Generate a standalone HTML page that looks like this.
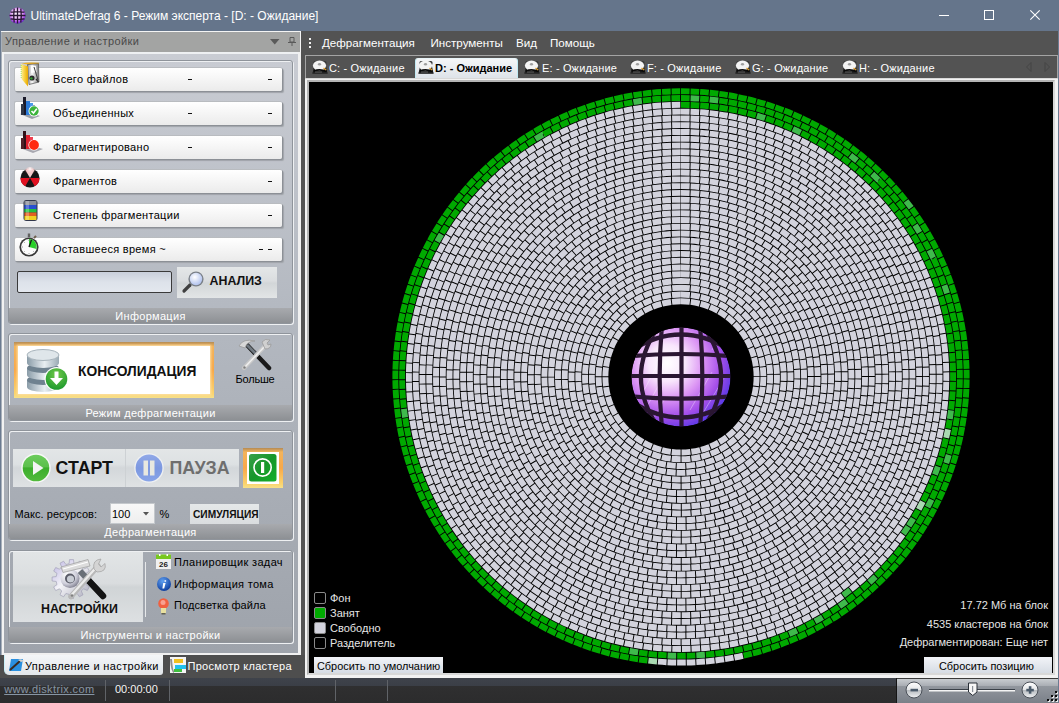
<!DOCTYPE html>
<html><head><meta charset="utf-8">
<style>
*{margin:0;padding:0;box-sizing:border-box}
html,body{width:1059px;height:703px;overflow:hidden;background:#535353;font-family:"Liberation Sans",sans-serif;font-size:11.5px;position:relative}
.a{position:absolute}
.t{position:absolute;white-space:nowrap;line-height:1}
svg{position:absolute;overflow:visible}
.gb{position:absolute;left:8px;width:285px;border:1px solid #8f949b;border-radius:3px;box-shadow:inset 1px 1px 0 #eef0f2,1px 1px 0 #eef0f2}
.gf{position:absolute;left:0;bottom:0;width:100%;height:15px;background:linear-gradient(#a8aaae,#8d9094);border-radius:0 0 2px 2px;color:#fff;text-align:center;font-size:11px;letter-spacing:.3px;line-height:17px}
.row{position:absolute;left:14px;width:268px;height:24px;border-top:1px solid #b9bcc0;border-left:1px solid #b9bcc0;border-radius:2px;background:linear-gradient(#ffffff,#ebebeb);box-shadow:1px 1px 0 #8c9096,2px 2px 1px #a0a4aa}
.rt{position:absolute;left:38px;top:6.2px;color:#000;font-size:11px;letter-spacing:.3px;line-height:1}
.dd{position:absolute;top:11px;width:4px;height:1px;background:#111}
.wt{color:#fff}
.tb{position:absolute;top:62.7px;color:#fff;font-size:11px;letter-spacing:.15px;line-height:1;white-space:nowrap}
.lg{position:absolute;left:314px;width:12px;height:12px;border:1px solid #8a8a8a;border-radius:2px}
.lt{position:absolute;left:330px;color:#e6e6e6;font-size:11px;line-height:1;white-space:nowrap}
.it{position:absolute;right:11px;color:#e6e6e6;font-size:11px;line-height:1;white-space:nowrap}
</style></head><body>

<!-- title bar -->
<div class="a" style="left:0;top:0;width:1059px;height:31px;background:#65758b"></div>
<svg style="left:9px;top:7px" width="17" height="17" viewBox="0 0 17 17"><defs><radialGradient id="ti" cx="45%" cy="40%" r="65%"><stop offset="0" stop-color="#ffffff"/><stop offset=".45" stop-color="#eec0f8"/><stop offset=".8" stop-color="#a040e0"/><stop offset="1" stop-color="#4020c0"/></radialGradient></defs><circle cx="8.5" cy="8.5" r="8" fill="url(#ti)"/><path d="M5.2 1.5Q4.2 8.5 5.2 15.5M8.5 0.5V16.5M11.8 1.5Q12.8 8.5 11.8 15.5M1.5 5.2Q8.5 4.2 15.5 5.2M0.5 8.5H16.5M1.5 11.8Q8.5 12.8 15.5 11.8" stroke="#2a1535" stroke-width="1.3" fill="none"/></svg>
<div class="t" style="left:30.5px;top:10px;color:#fff;font-size:12px">UltimateDefrag 6 - Режим эксперта - [D: - Ожидание]</div>
<div class="a" style="left:939px;top:15px;width:10px;height:1px;background:#fff"></div>
<div class="a" style="left:984px;top:10px;width:10px;height:10px;border:1px solid #fff"></div>
<svg style="left:1030px;top:10px" width="10" height="10"><path d="M0.3 0.3L9.7 9.7M9.7 0.3L0.3 9.7" stroke="#fff" stroke-width="1.1"/></svg>

<!-- left panel frame -->
<div class="a" style="left:0;top:31px;width:1px;height:624px;background:#6a7a90"></div>
<div class="a" style="left:1px;top:31px;width:1px;height:624px;background:#a8b0ba"></div>
<div class="a" style="left:2px;top:31px;width:2px;height:624px;background:#f2f2f2"></div>
<div class="a" style="left:1px;top:31px;width:300px;height:1px;background:#f4f4f4"></div>
<div class="a" style="left:298px;top:52px;width:3px;height:603px;background:#f0f0f0"></div>
<div class="a" style="left:300px;top:31px;width:1px;height:21px;background:#f4f4f4"></div>
<div class="a" style="left:2px;top:32px;width:298px;height:20px;background:#a3a4a3"></div>
<div class="t" style="left:5px;top:36.2px;color:#4a4a4a;font-size:11px;letter-spacing:.4px">Управление и настройки</div>
<svg style="left:270px;top:38.5px" width="10" height="6"><path d="M0 0H9.5L4.75 5.5Z" fill="#5a5a5a"/></svg>
<svg style="left:288px;top:37px" width="8" height="9"><path d="M2 0.5H6V5H2Z" stroke="#5a5a5a" fill="none"/><path d="M0 5.5H8M4 5.5V9" stroke="#5a5a5a"/></svg>
<div class="a" style="left:4px;top:52px;width:294px;height:2px;background:#eef0f2"></div>
<div class="a" style="left:4px;top:54px;width:294px;height:599px;background:linear-gradient(#c9ccd3,#b4b9c1 42%,#9ea3ab)"></div>
<div class="a" style="left:2px;top:653px;width:298px;height:2px;background:#f0f0f0"></div>

<!-- group boxes -->
<div class="gb" style="top:60px;height:264px"><div class="gf">Информация</div></div>
<div class="gb" style="top:333px;height:88px"><div class="gf">Режим дефрагментации</div></div>
<div class="gb" style="top:430px;height:110px"><div class="gf">Дефрагментация</div></div>
<div class="gb" style="top:550px;height:93px"><div class="gf">Инструменты и настройки</div></div>

<!-- info rows -->
<div class="row" style="top:67px"><div class="rt">Всего файлов</div><div class="dd" style="left:173px"></div><div class="dd" style="left:253px"></div></div>
<div class="row" style="top:101px"><div class="rt">Объединенных</div><div class="dd" style="left:173px"></div><div class="dd" style="left:253px"></div></div>
<div class="row" style="top:135px"><div class="rt">Фрагментировано</div><div class="dd" style="left:173px"></div><div class="dd" style="left:253px"></div></div>
<div class="row" style="top:169px"><div class="rt">Фрагментов</div><div class="dd" style="left:253px"></div></div>
<div class="row" style="top:203px"><div class="rt">Степень фрагментации</div><div class="dd" style="left:253px"></div></div>
<div class="row" style="top:237px"><div class="rt">Оставшееся время ~</div><div class="dd" style="left:244px"></div><div class="dd" style="left:253px"></div></div>

<svg style="left:20px;top:62px" width="20" height="25" viewBox="0 0 20 25">
 <defs><linearGradient id="fy" x1="0" x2="1"><stop offset="0" stop-color="#fff0a0"/><stop offset=".5" stop-color="#f8d040"/><stop offset="1" stop-color="#e8a800"/></linearGradient>
 <linearGradient id="fd" x1="0" x2="1"><stop offset="0" stop-color="#9a9a9a"/><stop offset=".4" stop-color="#f8f8f8"/><stop offset="1" stop-color="#7a7a7a"/></linearGradient></defs>
 <path d="M1.5 1.5Q8 0 19 0.8V2.2L8 2.5Z" fill="#f0b020"/>
 <path d="M7.5 2.5L18.5 1.8L19 20L9 22.5Z" fill="url(#fd)" stroke="#505050" stroke-width=".7"/>
 <path d="M11 4L16 4L16.5 10L11 11Z" fill="#ffffff" opacity=".9"/>
 <path d="M14 5L18 18" stroke="#404040" stroke-width="1"/>
 <circle cx="12" cy="16" r="2.6" fill="#2a2a2a"/><circle cx="11.4" cy="16.4" r="1.2" fill="#30a030"/>
 <path d="M16 17L18.5 20" stroke="#303030" stroke-width="1.2"/>
 <path d="M1 2L8 4.5V24.5L1.5 17Z" fill="url(#fy)"/>
 <path d="M1.2 3V16" stroke="#90e040" stroke-width=".8" stroke-dasharray="1 1"/>
</svg>
<svg style="left:19px;top:95px" width="22" height="25" viewBox="0 0 22 25">
 <path d="M1 19L13 24L21 21L9 17Z" fill="#9aa0a8"/>
 <rect x="4" y="2" width="3" height="18" fill="#1a1a2a"/>
 <rect x="2" y="9" width="3" height="11" fill="#303848"/>
 <rect x="7" y="6" width="4" height="14" fill="#2a7ad8"/>
 <rect x="11" y="8" width="3" height="12" fill="#4a9ae8"/>
 <rect x="14" y="10" width="2" height="8" fill="#607090"/>
 <circle cx="15" cy="16" r="5.5" fill="#fff"/><circle cx="15" cy="16" r="4.7" fill="#3cb43c"/>
 <path d="M12.5 16L14.5 18L17.8 13.8" stroke="#fff" stroke-width="1.6" fill="none"/>
</svg>
<svg style="left:19px;top:130px" width="25" height="24" viewBox="0 0 25 24">
 <path d="M1 18L14 23L24 19L10 15Z" fill="#a8a8b0"/>
 <rect x="4" y="1" width="3" height="18" fill="#301018"/>
 <rect x="2" y="8" width="3" height="11" fill="#502028"/>
 <rect x="7" y="5" width="4" height="14" fill="#e02030"/>
 <rect x="11" y="7" width="3" height="12" fill="#f04050"/>
 <circle cx="15" cy="15" r="5.6" fill="#fff"/><circle cx="15" cy="15" r="4.9" fill="#ff2a10"/>
</svg>
<svg style="left:20px;top:168px" width="20" height="20" viewBox="0 0 20 20">
 <defs><radialGradient id="rh" cx="50%" cy="15%" r="50%"><stop offset="0" stop-color="#fff"/><stop offset="1" stop-color="#f0a0a0" stop-opacity="0"/></radialGradient></defs>
 <circle cx="10" cy="10" r="9.5" fill="#161616"/>
 <path d="M10 10L0.5 10A9.5 9.5 0 0 0 5.25 18.2Z M10 10L19.5 10A9.5 9.5 0 0 1 14.75 18.2Z" fill="#e01020"/>
 <path d="M10 10L5.25 1.8A9.5 9.5 0 0 1 14.75 1.8Z" fill="#f4d0d0"/>
 <circle cx="10" cy="5" r="6" fill="url(#rh)"/>
</svg>
<svg style="left:23px;top:199px" width="15" height="23" viewBox="0 0 15 23">
 <rect x="0.5" y="1" width="14" height="21" rx="3" fill="#30364a"/>
 <rect x="1.5" y="2" width="12" height="4" fill="#8a8e98"/>
 <rect x="1.5" y="6" width="12" height="4" fill="#2850d0"/>
 <rect x="1.5" y="10" width="12" height="3.5" fill="#20c040"/>
 <rect x="1.5" y="13.5" width="12" height="3.5" fill="#e06020"/>
 <rect x="1.5" y="17" width="12" height="4" fill="#f0d020"/>
 <rect x="3" y="2" width="3" height="19" fill="#fff" opacity="0.25"/>
</svg>
<svg style="left:19px;top:233px" width="21" height="24" viewBox="0 0 21 24">
 <rect x="8.8" y="0.5" width="2.4" height="3.5" fill="#606060"/>
 <rect x="15" y="2.5" width="2" height="3" fill="#706050" transform="rotate(40 16 4)"/>
 <circle cx="10" cy="14" r="9.6" fill="#383838"/>
 <circle cx="10" cy="14" r="7.9" fill="#fbfbfb"/>
 <path d="M10 14V6.1A7.9 7.9 0 0 1 17.6 16Z" fill="#28d028"/>
 <path d="M10 14L12.6 6.6" stroke="#1a1a1a" stroke-width="1.3"/>
 <path d="M10 7v1M10 20v1M3 14h1M16 14h1M5 9l.7.7M5 19l.7-.7M15 19l-.7-.7" stroke="#888" stroke-width=".8"/>
</svg>


<div class="a" style="left:17px;top:271px;width:155px;height:22px;border:1px solid #3a3a3a;border-radius:2px;background:linear-gradient(#c9cfdb,#dde2ea 50%,#e3e7ee)"></div>
<div class="a" style="left:177px;top:267px;width:100px;height:31px;background:linear-gradient(#e4e7e8,#dadddf 45%,#d2d6d8 52%,#e2e5e6)"></div>
<div class="t" style="left:209.5px;top:275.3px;font-weight:bold;font-size:12.4px;color:#111">АНАЛИЗ</div>

<svg style="left:182px;top:270px" width="23" height="23" viewBox="0 0 23 23">
 <defs><radialGradient id="mg" cx="40%" cy="35%" r="60%"><stop offset="0" stop-color="#ffffff"/><stop offset="1" stop-color="#b8c8f0"/></radialGradient></defs>
 <path d="M2 21L8 15" stroke="#404040" stroke-width="3.2" stroke-linecap="round"/>
 <circle cx="14" cy="9" r="7.6" fill="#7a8088"/>
 <circle cx="14" cy="9" r="6.2" fill="url(#mg)"/>
</svg>


<!-- consolidation -->
<div class="a" style="left:14px;top:342px;width:200px;height:56px;background:linear-gradient(#b58c55,#f3b45c 8%,#f8a848 50%,#fbd46e 92%,#f6e08a)"></div>
<div class="a" style="left:18px;top:346px;width:192px;height:48px;background:#fff;box-shadow:0 0 2px 1px #fde0a8"></div>
<div class="t" style="left:78px;top:364.5px;font-weight:bold;font-size:13.8px;color:#111">КОНСОЛИДАЦИЯ</div>
<div class="t" style="left:235.5px;top:374.2px;color:#000;font-size:11px;letter-spacing:-.2px">Больше</div>

<svg style="left:26px;top:348px" width="46" height="46" viewBox="0 0 46 46">
 <defs>
  <linearGradient id="dbg" x1="0" x2="1"><stop offset="0" stop-color="#8a9ca8"/><stop offset=".55" stop-color="#e8eef2"/><stop offset="1" stop-color="#9aaab4"/></linearGradient>
  <radialGradient id="gg" cx="50%" cy="30%" r="70%"><stop offset="0" stop-color="#70c848"/><stop offset="1" stop-color="#1e9a2e"/></radialGradient>
 </defs>
 <path d="M1 32V39A16 5 0 0 0 33 39V32Z" fill="url(#dbg)"/>
 <ellipse cx="17" cy="32" rx="16" ry="5" fill="#6f8290"/>
 <path d="M1 20V27A16 5 0 0 0 33 27V20Z" fill="url(#dbg)"/>
 <ellipse cx="17" cy="20" rx="16" ry="5" fill="#6f8290"/>
 <path d="M1 7V15A16 5 0 0 0 33 15V7Z" fill="url(#dbg)"/>
 <ellipse cx="17" cy="7" rx="16" ry="5.5" fill="#dfe6ea" stroke="#a8b4bc" stroke-width="1"/>
 <circle cx="30.5" cy="31" r="12" fill="#fff"/>
 <circle cx="30.5" cy="31" r="10.8" fill="url(#gg)"/>
 <path d="M28.5 23.5H32.5V30H37L30.5 37L24 30H28.5Z" fill="#fff"/>
</svg>
<svg style="left:237px;top:337px" width="36" height="35" viewBox="0 0 36 35">
 <path d="M10 8L32 31" stroke="#1a1a1a" stroke-width="4.5" stroke-linecap="round"/>
 <path d="M10 8L20 18" stroke="#707880" stroke-width="3"/>
 <path d="M2 9Q6 1 18 4Q10 4 8 11Z" fill="#d8d8d8" stroke="#9a9a9a" stroke-width="0.8"/>
 <path d="M7 31L29 8" stroke="#c8c8c8" stroke-width="4.2" stroke-linecap="round"/>
 <path d="M7 31L29 8" stroke="#eeeeee" stroke-width="1.6"/>
 <path d="M25 5Q28 1 33 3L30 6L31 8L34 7Q34 12 28 12Z" fill="#d0d0d0" stroke="#9a9a9a" stroke-width="0.8"/>
 <circle cx="7.5" cy="30.5" r="1.2" fill="#808080"/>
</svg>


<!-- start/pause -->
<div class="a" style="left:13px;top:449px;width:226px;height:38px;background:linear-gradient(#e3e6e7,#dde1e3 40%,#d3d7da 50%,#dfe2e4)"></div>
<div class="a" style="left:125px;top:449px;width:1px;height:38px;background:#cdd1d4"></div>
<div class="t" style="left:55.5px;top:460px;font-weight:bold;font-size:17.8px;color:#111">СТАРТ</div>
<div class="t" style="left:169.5px;top:460px;font-weight:bold;font-size:17.8px;color:#6e6e6e">ПАУЗА</div>
<div class="a" style="left:243px;top:448px;width:40px;height:40px;background:linear-gradient(#b48a55,#f3b45c 10%,#f8a848 50%,#fbd46e 90%,#f6e08a)"></div>
<div class="a" style="left:247px;top:452px;width:32px;height:32px;background:#fff"></div>

<svg style="left:21px;top:453px" width="30" height="30" viewBox="0 0 30 30">
 <defs><linearGradient id="pg" x1="0" y1="0" x2="0" y2="1"><stop offset="0" stop-color="#6ccc5c"/><stop offset=".45" stop-color="#5cc04c"/><stop offset=".5" stop-color="#3cae2c"/><stop offset="1" stop-color="#52ba3c"/></linearGradient></defs>
 <circle cx="15" cy="15" r="14.7" fill="#f8f8f8"/>
 <circle cx="15" cy="15" r="13.3" fill="url(#pg)"/>
 <path d="M12 8V22L22.5 15Z" fill="#f4f4f4"/>
</svg>
<svg style="left:134px;top:453px" width="30" height="30" viewBox="0 0 30 30">
 <defs><linearGradient id="bg2" x1="0" y1="0" x2="0" y2="1"><stop offset="0" stop-color="#90a8e8"/><stop offset=".5" stop-color="#7c98e0"/><stop offset="1" stop-color="#88a4e8"/></linearGradient></defs>
 <circle cx="15" cy="15" r="14.7" fill="#eef0f2"/>
 <circle cx="15" cy="15" r="13.4" fill="url(#bg2)"/>
 <rect x="9.5" y="7.5" width="4.5" height="15" fill="#e8e8e0"/>
 <rect x="16" y="7.5" width="4.5" height="15" fill="#e8e8e0"/>
</svg>
<svg style="left:249px;top:454px" width="28" height="28" viewBox="0 0 28 28">
 <defs><linearGradient id="pw" x1="0" y1="0" x2="1" y2="1"><stop offset="0" stop-color="#3aa04a"/><stop offset=".5" stop-color="#16962a"/><stop offset="1" stop-color="#12b02a"/></linearGradient></defs>
 <rect x="0" y="0" width="27.5" height="27.5" rx="2.5" fill="url(#pw)"/>
 <circle cx="13.6" cy="13.5" r="8.6" stroke="#fff" stroke-width="1.6" fill="none"/>
 <rect x="12" y="8" width="3.2" height="11" fill="#fff"/>
</svg>


<div class="t" style="left:14.5px;top:508.7px;color:#000;font-size:11px;letter-spacing:.05px">Макс. ресурсов:</div>
<div class="a" style="left:110px;top:503px;width:45px;height:21px;background:linear-gradient(#f8f8f8,#eeeeee);border:1px solid #c4c8cc"></div>
<div class="t" style="left:112px;top:508.7px;color:#000;font-size:11px">100</div>
<svg style="left:143px;top:512px" width="6" height="4"><path d="M0 0H6L3 3.5Z" fill="#555"/></svg>
<div class="t" style="left:159.5px;top:508.7px;color:#000;font-size:11px">%</div>
<div class="a" style="left:190px;top:504px;width:69px;height:20px;background:linear-gradient(#e5e8e9,#dadddf)"></div>
<div class="t" style="left:193px;top:509.5px;font-weight:bold;font-size:10.2px;color:#111">СИМУЛЯЦИЯ</div>

<!-- settings -->
<div class="a" style="left:13px;top:552px;width:130px;height:70px;background:linear-gradient(#e2e5e6,#d9dcde 45%,#d0d4d6 50%,#dde0e2)"></div>
<div class="a" style="left:145px;top:562px;width:1px;height:55px;background:#e6e8ea"></div>
<div class="t" style="left:41px;top:603px;font-weight:bold;font-size:12.4px;color:#111">НАСТРОЙКИ</div>
<div class="t" style="left:174px;top:556.7px;color:#000;font-size:11px;letter-spacing:.35px">Планировщик задач</div>
<div class="t" style="left:174px;top:578.7px;color:#000;font-size:11px;letter-spacing:.3px">Информация тома</div>
<div class="t" style="left:174px;top:600.3px;color:#000;font-size:11px;letter-spacing:.1px">Подсветка файла</div>

<svg style="left:0;top:0" width="1" height="1">
 <defs>
  <linearGradient id="gr" x1="0" y1="0" x2="1" y2="1"><stop offset="0" stop-color="#b8b0e0"/><stop offset=".45" stop-color="#f4f4f8"/><stop offset="1" stop-color="#a8a8b8"/></linearGradient>
  <radialGradient id="gr2" cx=".35" cy=".3" r=".8"><stop offset="0" stop-color="#ffffff"/><stop offset=".6" stop-color="#d0d0dc"/><stop offset="1" stop-color="#707080"/></radialGradient>
 </defs>
 <path d="M69.5 559.6L73.5 559.6L73.9 563.7L77.1 564.5L79.4 561.2L83.0 563.2L81.3 567.0L83.5 569.2L87.3 567.5L89.3 571.1L86.0 573.4L86.8 576.6L90.9 577.0L90.9 581.0L86.8 581.4L86.0 584.6L89.3 586.9L87.3 590.5L83.5 588.8L81.3 591.0L83.0 594.8L79.4 596.8L77.1 593.5L73.9 594.3L73.5 598.4L69.5 598.4L69.1 594.3L65.9 593.5L63.6 596.8L60.0 594.8L61.7 591.0L59.5 588.8L55.7 590.5L53.7 586.9L57.0 584.6L56.2 581.4L52.1 581.0L52.1 577.0L56.2 576.6L57.0 573.4L53.7 571.1L55.7 567.5L59.5 569.2L61.7 567.0L60.0 563.2L63.6 561.2L65.9 564.5L69.1 563.7Z" fill="url(#gr)" stroke="#9a98b0" stroke-width=".6"/>
 <circle cx="70" cy="578.5" r="9.5" fill="url(#gr2)"/>
 <circle cx="70" cy="578.5" r="5" fill="#5a5c68"/>
 <circle cx="70.5" cy="579" r="3.6" fill="#c8ccd4"/>
 <path d="M80 571L103 596" stroke="#6a7078" stroke-width="6"/>
 <path d="M88 580L103 596" stroke="#141414" stroke-width="6.5" stroke-linecap="round"/>
 <path d="M61 567L88 559.5L90 566L63 572.5Z" fill="#dcdcdc" stroke="#9c9c9c" stroke-width=".7"/>
 <path d="M63 569L88 562" stroke="#ffffff" stroke-width="1.2"/>
 <path d="M71 596.5L98 566" stroke="#b8b8b8" stroke-width="5.5" stroke-linecap="round"/>
 <path d="M71.5 595L97 566.5" stroke="#ececec" stroke-width="2.2"/>
 <path d="M94 569Q92 560 101 559L98.5 564L101 567L105 563.5Q107 572 97 572Z" fill="#d4d4d4" stroke="#a0a0a0" stroke-width=".7"/>
 <circle cx="72" cy="595.5" r="1.2" fill="#808080"/>
</svg>
<svg style="left:156px;top:554px" width="15" height="15" viewBox="0 0 15 15">
 <rect x="0" y="0.5" width="15" height="14.5" fill="#f0f0f0"/>
 <rect x="0" y="0.5" width="15" height="4.5" fill="#78c820"/>
 <rect x="3" y="0" width="1.5" height="2" fill="#fff"/><rect x="10.5" y="0" width="1.5" height="2" fill="#fff"/>
 <text x="7.5" y="13" text-anchor="middle" font-family="Liberation Sans" font-weight="bold" font-size="8" fill="#222">26</text>
</svg>
<svg style="left:157px;top:577px" width="15" height="15" viewBox="0 0 15 15">
 <defs><radialGradient id="ib" cx="40%" cy="30%" r="70%"><stop offset="0" stop-color="#60a0f0"/><stop offset="1" stop-color="#1040a0"/></radialGradient></defs>
 <circle cx="7" cy="7" r="7" fill="url(#ib)"/>
 <path d="M7.5 3.2h1.6v1.6h-1.6z M6.2 6h2.4l-1.4 5.5h-1.8z" fill="#fff"/>
</svg>
<svg style="left:158px;top:598px" width="11" height="17" viewBox="0 0 11 17">
 <circle cx="5.5" cy="5.5" r="5.3" fill="#f06040"/>
 <circle cx="5" cy="4.5" r="2.5" fill="#f8a090"/>
 <rect x="3" y="10" width="5" height="5" fill="#e8e0a0"/>
 <rect x="3.5" y="15" width="4" height="1.5" fill="#606050"/>
</svg>


<!-- bottom tabs -->
<div class="a" style="left:0;top:655px;width:305px;height:23px;background:#4e4e4e"></div>
<div class="a" style="left:4px;top:655px;width:159px;height:20px;background:linear-gradient(#f4f6f8,#e2e6ea);border-radius:0 0 3px 5px;border-left:1px solid #c8f0f8"></div>
<div class="t" style="left:25px;top:660.7px;color:#000;font-size:11px;letter-spacing:.38px">Управление и настройки</div>
<div class="t" style="left:187.5px;top:660.7px;color:#fff;font-size:11px;letter-spacing:.28px">Просмотр кластера</div>

<svg style="left:8px;top:658px" width="16" height="14" viewBox="0 0 16 14">
 <path d="M3 1H15L13 13H1Z" fill="#2a90e0"/>
 <path d="M2 12L12 3" stroke="#3a2a20" stroke-width="2"/>
 <path d="M10 2Q13 0 16 3L13 4Z" fill="#d0d0d0"/>
</svg>
<svg style="left:170px;top:657px" width="16" height="16" viewBox="0 0 16 16">
 <rect x="0" y="0" width="16" height="16" fill="#f4f4f4"/>
 <path d="M1 2Q2 15 4 15" stroke="#909090" stroke-width="2" fill="none"/>
 <rect x="4" y="2" width="9" height="4" fill="#f0c020"/>
 <rect x="5" y="8" width="11" height="4" fill="#20c0f0"/>
 <rect x="4" y="12" width="8" height="3" fill="#40c040"/>
</svg>


<!-- status bar -->
<div class="a" style="left:0;top:678px;width:1059px;height:25px;background:linear-gradient(#3f434b,#3b3f47 32%,#2f2f30 33%,#2c2c2d)"></div>
<div class="t" style="left:4.2px;top:684.2px;color:#8795a4;font-size:11px;letter-spacing:.37px;text-decoration:underline">www.disktrix.com</div>
<div class="a" style="left:105px;top:680px;width:1px;height:21px;background:#606368"></div>
<div class="t" style="left:115px;top:684.2px;color:#f4f4f4;font-size:11px">00:00:00</div>
<div class="a" style="left:169px;top:680px;width:1px;height:21px;background:#606368"></div>
<div class="a" style="left:335px;top:680px;width:1px;height:21px;background:#606368"></div>
<div class="a" style="left:387px;top:680px;width:1px;height:21px;background:#606368"></div>
<div class="a" style="left:896px;top:678px;width:2px;height:25px;background:#151515"></div>
<div class="a" style="left:897px;top:678px;width:162px;height:25px;background:linear-gradient(#3a3a3a 0,#3a3a3a 1px,#c8ccd0 1px,#a9adb3 32%,#92979e 33%,#858a92 70%,#7a8088)"></div>

<svg style="left:0;top:0" width="1" height="1">
 <defs><linearGradient id="zb" x1="0" y1="0" x2="0" y2="1"><stop offset="0" stop-color="#ffffff"/><stop offset=".48" stop-color="#e4e6e8"/><stop offset=".52" stop-color="#b8bcc0"/><stop offset="1" stop-color="#f0f2f4"/></linearGradient></defs>
 <circle cx="914" cy="690" r="8" fill="url(#zb)" stroke="#4a5058" stroke-width="1"/>
 <rect x="910.5" y="688.8" width="7.5" height="2.6" fill="#4a5a6a"/>
 <rect x="929" y="689" width="86" height="1" fill="#3a4048"/><rect x="929" y="690" width="86" height="1.5" fill="#f4f4f4"/>
 <path d="M968.5 683H977V692L972.75 695.5L968.5 692Z" fill="#f6f6f6" stroke="#2a3038" stroke-width="1"/>
 <rect x="972" y="686" width="1.2" height="6" fill="#8a9098"/>
 <circle cx="1030" cy="690" r="8" fill="url(#zb)" stroke="#4a5058" stroke-width="1"/>
 <rect x="1026.3" y="688.8" width="7.5" height="2.6" fill="#4a5a6a"/><rect x="1028.8" y="686.2" width="2.6" height="7.5" fill="#4a5a6a"/>
 <path d="M1056 692h2v2h-2zM1052 696h2v2h-2zM1056 696h2v2h-2zM1048 700h2v2h-2zM1052 700h2v2h-2zM1056 700h2v2h-2z" fill="#f4f4f4" opacity=".9"/>
 <path d="M1055 691h2v2h-2zM1051 695h2v2h-2zM1055 695h2v2h-2zM1047 699h2v2h-2zM1051 699h2v2h-2zM1055 699h2v2h-2z" fill="#0a0a0a"/>
</svg>


<!-- menu bar -->
<svg style="left:308px;top:37px" width="4" height="12"><path d="M1 1h2v2h-2zM1 5h2v2h-2zM1 9h2v2h-2z" fill="#f0f0f0"/></svg>
<div class="t wt" style="left:322px;top:37px;font-size:11.6px">Дефрагментация</div>
<div class="t wt" style="left:430.5px;top:37px;font-size:11.6px">Инструменты</div>
<div class="t wt" style="left:516px;top:37px;font-size:11.6px">Вид</div>
<div class="t wt" style="left:550px;top:37px;font-size:11.6px">Помощь</div>

<!-- tab strip -->
<div class="a" style="left:305px;top:55px;width:753px;height:1px;background:#a4a4a4"></div>
<div class="a" style="left:305px;top:55px;width:1px;height:24px;background:#a4a4a4"></div>
<div class="a" style="left:1057px;top:55px;width:1px;height:24px;background:#a4a4a4"></div>
<div class="a" style="left:415px;top:58px;width:103px;height:21px;background:linear-gradient(#f4f6f8,#dde2e8);border-left:1px solid #c0eaf4;border-right:1px solid #c0eaf4;border-top:1px solid #e8f4f8;border-radius:3px 3px 0 0"></div>
<div class="tb" style="left:329px">C: - Ожидание</div>
<div class="tb" style="left:435px;color:#000;font-weight:bold;font-size:11px;letter-spacing:0;top:62.7px">D: - Ожидание</div>
<div class="tb" style="left:542px">E: - Ожидание</div>
<div class="tb" style="left:647px">F: - Ожидание</div>
<div class="tb" style="left:752px">G: - Ожидание</div>
<div class="tb" style="left:859px">H: - Ожидание</div>
<svg style="left:1026px;top:62px" width="24" height="10"><path d="M5 0.5L0.5 5L5 9.5Z M19 0.5L23.5 5L19 9.5Z" stroke="#454545" fill="none" stroke-width="1"/></svg>
<svg style="left:312px;top:60px" width="16" height="14" viewBox="0 0 16 14">
 <path d="M2.5 4H13.5L15.5 13.5H0.5Z" fill="#1a1a1a"/>
 <rect x="1.5" y="1" width="13" height="4" rx="1.5" fill="#3a3a3a"/>
 <ellipse cx="7.5" cy="5.6" rx="6.6" ry="5.2" fill="#f4f4f4"/>
 <ellipse cx="7.5" cy="4.2" rx="1.6" ry="1.3" fill="#a0a0a0"/>
 <path d="M2 11Q8 8.6 14.5 11.5" stroke="#0a0a0a" stroke-width="1.6" fill="none"/>
 <path d="M11.5 8L14.2 10" stroke="#e0a030" stroke-width="1.4"/>
 <path d="M3 12.2H10" stroke="#909090" stroke-width=".8"/>
 <rect x="0.5" y="12.5" width="15" height="1.2" fill="#2a2a2a"/>
</svg><svg style="left:418px;top:60px" width="16" height="14" viewBox="0 0 16 14">
 <path d="M2.5 4H13.5L15.5 13.5H0.5Z" fill="#1a1a1a"/>
 <rect x="1.5" y="1" width="13" height="4" rx="1.5" fill="#3a3a3a"/>
 <ellipse cx="7.5" cy="5.6" rx="6.6" ry="5.2" fill="#f4f4f4"/>
 <ellipse cx="7.5" cy="4.2" rx="1.6" ry="1.3" fill="#a0a0a0"/>
 <path d="M2 11Q8 8.6 14.5 11.5" stroke="#0a0a0a" stroke-width="1.6" fill="none"/>
 <path d="M11.5 8L14.2 10" stroke="#e0a030" stroke-width="1.4"/>
 <path d="M3 12.2H10" stroke="#909090" stroke-width=".8"/>
 <rect x="0.5" y="12.5" width="15" height="1.2" fill="#2a2a2a"/>
</svg><svg style="left:524px;top:60px" width="16" height="14" viewBox="0 0 16 14">
 <path d="M2.5 4H13.5L15.5 13.5H0.5Z" fill="#1a1a1a"/>
 <rect x="1.5" y="1" width="13" height="4" rx="1.5" fill="#3a3a3a"/>
 <ellipse cx="7.5" cy="5.6" rx="6.6" ry="5.2" fill="#f4f4f4"/>
 <ellipse cx="7.5" cy="4.2" rx="1.6" ry="1.3" fill="#a0a0a0"/>
 <path d="M2 11Q8 8.6 14.5 11.5" stroke="#0a0a0a" stroke-width="1.6" fill="none"/>
 <path d="M11.5 8L14.2 10" stroke="#e0a030" stroke-width="1.4"/>
 <path d="M3 12.2H10" stroke="#909090" stroke-width=".8"/>
 <rect x="0.5" y="12.5" width="15" height="1.2" fill="#2a2a2a"/>
</svg><svg style="left:630px;top:60px" width="16" height="14" viewBox="0 0 16 14">
 <path d="M2.5 4H13.5L15.5 13.5H0.5Z" fill="#1a1a1a"/>
 <rect x="1.5" y="1" width="13" height="4" rx="1.5" fill="#3a3a3a"/>
 <ellipse cx="7.5" cy="5.6" rx="6.6" ry="5.2" fill="#f4f4f4"/>
 <ellipse cx="7.5" cy="4.2" rx="1.6" ry="1.3" fill="#a0a0a0"/>
 <path d="M2 11Q8 8.6 14.5 11.5" stroke="#0a0a0a" stroke-width="1.6" fill="none"/>
 <path d="M11.5 8L14.2 10" stroke="#e0a030" stroke-width="1.4"/>
 <path d="M3 12.2H10" stroke="#909090" stroke-width=".8"/>
 <rect x="0.5" y="12.5" width="15" height="1.2" fill="#2a2a2a"/>
</svg><svg style="left:735px;top:60px" width="16" height="14" viewBox="0 0 16 14">
 <path d="M2.5 4H13.5L15.5 13.5H0.5Z" fill="#1a1a1a"/>
 <rect x="1.5" y="1" width="13" height="4" rx="1.5" fill="#3a3a3a"/>
 <ellipse cx="7.5" cy="5.6" rx="6.6" ry="5.2" fill="#f4f4f4"/>
 <ellipse cx="7.5" cy="4.2" rx="1.6" ry="1.3" fill="#a0a0a0"/>
 <path d="M2 11Q8 8.6 14.5 11.5" stroke="#0a0a0a" stroke-width="1.6" fill="none"/>
 <path d="M11.5 8L14.2 10" stroke="#e0a030" stroke-width="1.4"/>
 <path d="M3 12.2H10" stroke="#909090" stroke-width=".8"/>
 <rect x="0.5" y="12.5" width="15" height="1.2" fill="#2a2a2a"/>
</svg><svg style="left:842px;top:60px" width="16" height="14" viewBox="0 0 16 14">
 <path d="M2.5 4H13.5L15.5 13.5H0.5Z" fill="#1a1a1a"/>
 <rect x="1.5" y="1" width="13" height="4" rx="1.5" fill="#3a3a3a"/>
 <ellipse cx="7.5" cy="5.6" rx="6.6" ry="5.2" fill="#f4f4f4"/>
 <ellipse cx="7.5" cy="4.2" rx="1.6" ry="1.3" fill="#a0a0a0"/>
 <path d="M2 11Q8 8.6 14.5 11.5" stroke="#0a0a0a" stroke-width="1.6" fill="none"/>
 <path d="M11.5 8L14.2 10" stroke="#e0a030" stroke-width="1.4"/>
 <path d="M3 12.2H10" stroke="#909090" stroke-width=".8"/>
 <rect x="0.5" y="12.5" width="15" height="1.2" fill="#2a2a2a"/>
</svg>

<!-- disk frame -->
<div class="a" style="left:305px;top:78px;width:753px;height:600px;background:#f2f2f2"></div>
<div class="a" style="left:305px;top:78px;width:753px;height:1px;background:#d8d8d8"></div>
<div class="a" style="left:307px;top:80px;width:748px;height:595px;border-style:solid;border-width:2px;border-color:#b4b4b4 #d8d8d8 #d8d8d8 #b4b4b4;background:#000"></div>
<svg width="1059" height="703" viewBox="0 0 1059 703" style="position:absolute;left:0;top:0" fill="none"><circle cx="681.0" cy="376.9" r="265.31" stroke="#d3d3dd" stroke-width="5.93" stroke-dasharray="8.631 0.950" transform="rotate(-90 681.0 376.9)"/><circle cx="681.0" cy="376.9" r="258.54" stroke="#d3d3dd" stroke-width="5.93" stroke-dasharray="8.662 0.950" transform="rotate(-90 681.0 376.9)"/><circle cx="681.0" cy="376.9" r="251.76" stroke="#d3d3dd" stroke-width="5.93" stroke-dasharray="8.637 0.950" transform="rotate(-90 681.0 376.9)"/><circle cx="681.0" cy="376.9" r="244.99" stroke="#d3d3dd" stroke-width="5.93" stroke-dasharray="8.671 0.950" transform="rotate(-90 681.0 376.9)"/><circle cx="681.0" cy="376.9" r="238.21" stroke="#d3d3dd" stroke-width="5.93" stroke-dasharray="8.644 0.950" transform="rotate(-90 681.0 376.9)"/><circle cx="681.0" cy="376.9" r="231.44" stroke="#d3d3dd" stroke-width="5.93" stroke-dasharray="8.680 0.950" transform="rotate(-90 681.0 376.9)"/><circle cx="681.0" cy="376.9" r="224.66" stroke="#d3d3dd" stroke-width="5.93" stroke-dasharray="8.653 0.950" transform="rotate(-90 681.0 376.9)"/><circle cx="681.0" cy="376.9" r="217.89" stroke="#d3d3dd" stroke-width="5.93" stroke-dasharray="8.691 0.950" transform="rotate(-90 681.0 376.9)"/><circle cx="681.0" cy="376.9" r="211.11" stroke="#d3d3dd" stroke-width="5.93" stroke-dasharray="8.662 0.950" transform="rotate(-90 681.0 376.9)"/><circle cx="681.0" cy="376.9" r="204.34" stroke="#d3d3dd" stroke-width="5.93" stroke-dasharray="8.703 0.950" transform="rotate(-90 681.0 376.9)"/><circle cx="681.0" cy="376.9" r="197.56" stroke="#d3d3dd" stroke-width="5.93" stroke-dasharray="8.673 0.950" transform="rotate(-90 681.0 376.9)"/><circle cx="681.0" cy="376.9" r="190.79" stroke="#d3d3dd" stroke-width="5.93" stroke-dasharray="8.717 0.950" transform="rotate(-90 681.0 376.9)"/><circle cx="681.0" cy="376.9" r="184.01" stroke="#d3d3dd" stroke-width="5.93" stroke-dasharray="8.685 0.950" transform="rotate(-90 681.0 376.9)"/><circle cx="681.0" cy="376.9" r="177.24" stroke="#d3d3dd" stroke-width="5.93" stroke-dasharray="8.734 0.950" transform="rotate(-90 681.0 376.9)"/><circle cx="681.0" cy="376.9" r="170.46" stroke="#d3d3dd" stroke-width="5.93" stroke-dasharray="8.699 0.950" transform="rotate(-90 681.0 376.9)"/><circle cx="681.0" cy="376.9" r="163.69" stroke="#d3d3dd" stroke-width="5.93" stroke-dasharray="8.753 0.950" transform="rotate(-90 681.0 376.9)"/><circle cx="681.0" cy="376.9" r="156.91" stroke="#d3d3dd" stroke-width="5.93" stroke-dasharray="8.716 0.950" transform="rotate(-90 681.0 376.9)"/><circle cx="681.0" cy="376.9" r="150.14" stroke="#d3d3dd" stroke-width="5.93" stroke-dasharray="8.775 0.950" transform="rotate(-90 681.0 376.9)"/><circle cx="681.0" cy="376.9" r="143.36" stroke="#d3d3dd" stroke-width="5.93" stroke-dasharray="8.736 0.950" transform="rotate(-90 681.0 376.9)"/><circle cx="681.0" cy="376.9" r="136.59" stroke="#d3d3dd" stroke-width="5.93" stroke-dasharray="8.802 0.950" transform="rotate(-90 681.0 376.9)"/><circle cx="681.0" cy="376.9" r="129.81" stroke="#d3d3dd" stroke-width="5.93" stroke-dasharray="8.760 0.950" transform="rotate(-90 681.0 376.9)"/><circle cx="681.0" cy="376.9" r="123.04" stroke="#d3d3dd" stroke-width="5.93" stroke-dasharray="8.836 0.950" transform="rotate(-90 681.0 376.9)"/><circle cx="681.0" cy="376.9" r="116.26" stroke="#d3d3dd" stroke-width="5.93" stroke-dasharray="8.790 0.950" transform="rotate(-90 681.0 376.9)"/><circle cx="681.0" cy="376.9" r="109.49" stroke="#d3d3dd" stroke-width="5.93" stroke-dasharray="8.878 0.950" transform="rotate(-90 681.0 376.9)"/><circle cx="681.0" cy="376.9" r="102.71" stroke="#d3d3dd" stroke-width="5.93" stroke-dasharray="8.828 0.950" transform="rotate(-90 681.0 376.9)"/><circle cx="681.0" cy="376.9" r="95.94" stroke="#d3d3dd" stroke-width="5.93" stroke-dasharray="8.932 0.950" transform="rotate(-90 681.0 376.9)"/><circle cx="681.0" cy="376.9" r="89.16" stroke="#d3d3dd" stroke-width="5.93" stroke-dasharray="8.879 0.950" transform="rotate(-90 681.0 376.9)"/><circle cx="681.0" cy="376.9" r="82.39" stroke="#d3d3dd" stroke-width="5.93" stroke-dasharray="9.005 0.950" transform="rotate(-90 681.0 376.9)"/><circle cx="681.0" cy="376.9" r="75.61" stroke="#d3d3dd" stroke-width="5.93" stroke-dasharray="8.948 0.950" transform="rotate(-90 681.0 376.9)"/><path d="M681.00 91.26A285.64 285.64 0 0 1 906.02 200.96" stroke="#00a900" stroke-width="5.93" stroke-dasharray="8.647 0.950"/><path d="M906.02 200.96A285.64 285.64 0 0 1 911.80 208.62" stroke="#3fba4c" stroke-width="5.93" stroke-dasharray="8.647 0.950"/><path d="M911.80 208.62A285.64 285.64 0 0 1 742.89 655.75" stroke="#00a900" stroke-width="5.93" stroke-dasharray="8.647 0.950"/><path d="M742.89 655.75A285.64 285.64 0 0 1 657.03 661.53" stroke="#d3d3dd" stroke-width="5.93" stroke-dasharray="8.647 0.950"/><path d="M657.03 661.53A285.64 285.64 0 0 1 647.49 660.56" stroke="#a9d9b1" stroke-width="5.93" stroke-dasharray="8.647 0.950"/><path d="M647.49 660.56A285.64 285.64 0 0 1 450.20 208.62" stroke="#00a900" stroke-width="5.93" stroke-dasharray="8.647 0.950"/><path d="M450.20 208.62A285.64 285.64 0 0 1 681.00 91.26" stroke="#00a900" stroke-width="5.93" stroke-dasharray="8.647 0.950"/><path d="M681.00 98.04A278.86 278.86 0 0 1 690.57 98.20" stroke="#00a900" stroke-width="5.93" stroke-dasharray="8.625 0.950"/><path d="M690.57 98.20A278.86 278.86 0 0 1 700.13 98.69" stroke="#3fba4c" stroke-width="5.93" stroke-dasharray="8.625 0.950"/><path d="M700.13 98.69A278.86 278.86 0 0 1 709.67 99.52" stroke="#00a900" stroke-width="5.93" stroke-dasharray="8.625 0.950"/><path d="M709.67 99.52A278.86 278.86 0 0 1 719.18 100.66" stroke="#3fba4c" stroke-width="5.93" stroke-dasharray="8.625 0.950"/><path d="M719.18 100.66A278.86 278.86 0 0 1 850.29 155.30" stroke="#00a900" stroke-width="5.93" stroke-dasharray="8.625 0.950"/><path d="M850.29 155.30A278.86 278.86 0 0 1 857.79 161.24" stroke="#3fba4c" stroke-width="5.93" stroke-dasharray="8.625 0.950"/><path d="M857.79 161.24A278.86 278.86 0 0 1 872.17 173.88" stroke="#00a900" stroke-width="5.93" stroke-dasharray="8.625 0.950"/><path d="M872.17 173.88A278.86 278.86 0 0 1 879.03 180.56" stroke="#3fba4c" stroke-width="5.93" stroke-dasharray="8.625 0.950"/><path d="M879.03 180.56A278.86 278.86 0 0 1 915.00 225.22" stroke="#00a900" stroke-width="5.93" stroke-dasharray="8.625 0.950"/><path d="M915.00 225.22A278.86 278.86 0 0 1 920.07 233.34" stroke="#3fba4c" stroke-width="5.93" stroke-dasharray="8.625 0.950"/><path d="M920.07 233.34A278.86 278.86 0 0 1 929.36 250.09" stroke="#00a900" stroke-width="5.93" stroke-dasharray="8.625 0.950"/><path d="M929.36 250.09A278.86 278.86 0 0 1 933.57 258.69" stroke="#3fba4c" stroke-width="5.93" stroke-dasharray="8.625 0.950"/><path d="M933.57 258.69A278.86 278.86 0 0 1 944.38 285.28" stroke="#00a900" stroke-width="5.93" stroke-dasharray="8.625 0.950"/><path d="M944.38 285.28A278.86 278.86 0 0 1 947.37 294.38" stroke="#3fba4c" stroke-width="5.93" stroke-dasharray="8.625 0.950"/><path d="M947.37 294.38A278.86 278.86 0 0 1 948.75 454.84" stroke="#00a900" stroke-width="5.93" stroke-dasharray="8.625 0.950"/><path d="M948.75 454.84A278.86 278.86 0 0 1 945.92 463.98" stroke="#3fba4c" stroke-width="5.93" stroke-dasharray="8.625 0.950"/><path d="M945.92 463.98A278.86 278.86 0 0 1 931.50 499.43" stroke="#00a900" stroke-width="5.93" stroke-dasharray="8.625 0.950"/><path d="M931.50 499.43A278.86 278.86 0 0 1 927.15 507.96" stroke="#3fba4c" stroke-width="5.93" stroke-dasharray="8.625 0.950"/><path d="M927.15 507.96A278.86 278.86 0 0 1 875.63 576.61" stroke="#00a900" stroke-width="5.93" stroke-dasharray="8.625 0.950"/><path d="M875.63 576.61A278.86 278.86 0 0 1 868.66 583.17" stroke="#3fba4c" stroke-width="5.93" stroke-dasharray="8.625 0.950"/><path d="M868.66 583.17A278.86 278.86 0 0 1 846.46 601.37" stroke="#00a900" stroke-width="5.93" stroke-dasharray="8.625 0.950"/><path d="M846.46 601.37A278.86 278.86 0 0 1 838.65 606.92" stroke="#3fba4c" stroke-width="5.93" stroke-dasharray="8.625 0.950"/><path d="M838.65 606.92A278.86 278.86 0 0 1 822.50 617.20" stroke="#00a900" stroke-width="5.93" stroke-dasharray="8.625 0.950"/><path d="M822.50 617.20A278.86 278.86 0 0 1 814.17 621.91" stroke="#3fba4c" stroke-width="5.93" stroke-dasharray="8.625 0.950"/><path d="M814.17 621.91A278.86 278.86 0 0 1 797.04 630.47" stroke="#00a900" stroke-width="5.93" stroke-dasharray="8.625 0.950"/><path d="M797.04 630.47A278.86 278.86 0 0 1 788.27 634.31" stroke="#3fba4c" stroke-width="5.93" stroke-dasharray="8.625 0.950"/><path d="M788.27 634.31A278.86 278.86 0 0 1 704.91 654.74" stroke="#00a900" stroke-width="5.93" stroke-dasharray="8.625 0.950"/><path d="M704.91 654.74A278.86 278.86 0 0 1 695.36 655.39" stroke="#3fba4c" stroke-width="5.93" stroke-dasharray="8.625 0.950"/><path d="M695.36 655.39A278.86 278.86 0 0 1 676.21 655.72" stroke="#00a900" stroke-width="5.93" stroke-dasharray="8.625 0.950"/><path d="M676.21 655.72A278.86 278.86 0 0 1 666.64 655.39" stroke="#3fba4c" stroke-width="5.93" stroke-dasharray="8.625 0.950"/><path d="M666.64 655.39A278.86 278.86 0 0 1 638.09 652.44" stroke="#00a900" stroke-width="5.93" stroke-dasharray="8.625 0.950"/><path d="M638.09 652.44A278.86 278.86 0 0 1 628.65 650.81" stroke="#3fba4c" stroke-width="5.93" stroke-dasharray="8.625 0.950"/><path d="M628.65 650.81A278.86 278.86 0 0 1 405.10 417.45" stroke="#00a900" stroke-width="5.93" stroke-dasharray="8.625 0.950"/><path d="M405.10 417.45A278.86 278.86 0 0 1 403.87 407.95" stroke="#3fba4c" stroke-width="5.93" stroke-dasharray="8.625 0.950"/><path d="M403.87 407.95A278.86 278.86 0 0 1 437.14 241.63" stroke="#00a900" stroke-width="5.93" stroke-dasharray="8.625 0.950"/><path d="M437.14 241.63A278.86 278.86 0 0 1 441.93 233.34" stroke="#3fba4c" stroke-width="5.93" stroke-dasharray="8.625 0.950"/><path d="M441.93 233.34A278.86 278.86 0 0 1 535.40 139.07" stroke="#00a900" stroke-width="5.93" stroke-dasharray="8.625 0.950"/><path d="M535.40 139.07A278.86 278.86 0 0 1 543.65 134.21" stroke="#3fba4c" stroke-width="5.93" stroke-dasharray="8.625 0.950"/><path d="M543.65 134.21A278.86 278.86 0 0 1 633.36 102.14" stroke="#00a900" stroke-width="5.93" stroke-dasharray="8.625 0.950"/><path d="M633.36 102.14A278.86 278.86 0 0 1 642.82 100.66" stroke="#3fba4c" stroke-width="5.93" stroke-dasharray="8.625 0.950"/><path d="M642.82 100.66A278.86 278.86 0 0 1 681.00 98.04" stroke="#00a900" stroke-width="5.93" stroke-dasharray="8.625 0.950"/><path d="M681.00 104.81A272.09 272.09 0 0 1 756.82 115.59" stroke="#00a900" stroke-width="5.93" stroke-dasharray="8.654 0.950"/><path d="M756.82 115.59A272.09 272.09 0 0 1 765.99 118.43" stroke="#3fba4c" stroke-width="5.93" stroke-dasharray="8.654 0.950"/><path d="M765.99 118.43A272.09 272.09 0 0 1 792.84 128.86" stroke="#00a900" stroke-width="5.93" stroke-dasharray="8.654 0.950"/><path d="M792.84 128.86A272.09 272.09 0 0 1 801.52 132.96" stroke="#3fba4c" stroke-width="5.93" stroke-dasharray="8.654 0.950"/><path d="M801.52 132.96A272.09 272.09 0 0 1 951.01 410.43" stroke="#00a900" stroke-width="5.93" stroke-dasharray="8.654 0.950"/><path d="M951.01 410.43A272.09 272.09 0 0 1 949.66 419.94" stroke="#3fba4c" stroke-width="5.93" stroke-dasharray="8.654 0.950"/><path d="M949.66 419.94A272.09 272.09 0 0 1 947.98 429.39" stroke="#00a900" stroke-width="5.93" stroke-dasharray="8.654 0.950"/><path d="M947.98 429.39A272.09 272.09 0 0 1 945.96 438.78" stroke="#a9d9b1" stroke-width="5.93" stroke-dasharray="8.654 0.950"/><path d="M945.96 438.78A272.09 272.09 0 0 1 937.93 466.44" stroke="#00a900" stroke-width="5.93" stroke-dasharray="8.654 0.950"/><path d="M937.93 466.44A272.09 272.09 0 0 1 934.61 475.45" stroke="#3fba4c" stroke-width="5.93" stroke-dasharray="8.654 0.950"/><path d="M934.61 475.45A272.09 272.09 0 0 1 922.77 501.71" stroke="#00a900" stroke-width="5.93" stroke-dasharray="8.654 0.950"/><path d="M922.77 501.71A272.09 272.09 0 0 1 918.22 510.16" stroke="#a9d9b1" stroke-width="5.93" stroke-dasharray="8.654 0.950"/><path d="M918.22 510.16A272.09 272.09 0 0 1 913.37 518.45" stroke="#00a900" stroke-width="5.93" stroke-dasharray="8.654 0.950"/><path d="M913.37 518.45A272.09 272.09 0 0 1 902.80 534.49" stroke="#3fba4c" stroke-width="5.93" stroke-dasharray="8.654 0.950"/><path d="M902.80 534.49A272.09 272.09 0 0 1 850.11 590.05" stroke="#d3d3dd" stroke-width="5.93" stroke-dasharray="8.654 0.950"/><path d="M850.11 590.05A272.09 272.09 0 0 1 842.48 595.89" stroke="#3fba4c" stroke-width="5.93" stroke-dasharray="8.654 0.950"/><path d="M842.48 595.89A272.09 272.09 0 0 1 410.99 410.43" stroke="#d3d3dd" stroke-width="5.93" stroke-dasharray="8.654 0.950"/><path d="M410.99 410.43A272.09 272.09 0 0 1 681.00 104.81" stroke="#d3d3dd" stroke-width="5.93" stroke-dasharray="8.654 0.950"/><defs><radialGradient id="glb" cx="0.36" cy="0.36" r="0.72"><stop offset="0" stop-color="#ffffff"/><stop offset="0.26" stop-color="#f8e6fc"/><stop offset="0.5" stop-color="#dc96f4"/><stop offset="0.75" stop-color="#a650ea"/><stop offset="0.92" stop-color="#6a3ce6"/><stop offset="1" stop-color="#4a3cf0"/></radialGradient>
<clipPath id="gc"><circle cx="681" cy="377" r="49.5"/></clipPath></defs>
<circle cx="681" cy="377" r="49.5" fill="url(#glb)"/>
<g clip-path="url(#gc)">
<path d="M640 398L660 360M644 412L668 368M690 410L712 372M700 418L724 378M650 425L664 400M712 350L726 326" stroke="#ffffff" stroke-width=".8" opacity=".45"/>
<g stroke="#2a1632" stroke-width="4.2" fill="none">
<path d="M681.5 320V434"/>
<path d="M662.3 322Q657 377 662.3 432"/><path d="M699.7 322Q705 377 699.7 432"/>
<path d="M661.8 322Q620 377 661.8 432"/><path d="M700.2 322Q742 377 700.2 432"/>
<path d="M626 376H736"/>
<path d="M626 356.7Q681 351.3 736 356.7"/><path d="M626 396Q681 401.4 736 396"/>
<path d="M626 354.3Q681 314.7 736 354.3"/><path d="M626 397.7Q681 437.3 736 397.7"/>
</g></g>
<circle cx="681" cy="377" r="50.5" stroke="#000" stroke-width="2" fill="none"/>
</svg>

<!-- legend -->
<div class="lg" style="top:592px"></div>
<div class="lg" style="top:607px;background:#00aa00"></div>
<div class="lg" style="top:622px;background:#d3d3dd"></div>
<div class="lg" style="top:637px"></div>
<div class="lt" style="top:593px">Фон</div>
<div class="lt" style="top:608px">Занят</div>
<div class="lt" style="top:623px">Свободно</div>
<div class="lt" style="top:638px">Разделитель</div>
<div class="it" style="top:600px">17.72 Мб на блок</div>
<div class="it" style="top:619px">4535 кластеров на блок</div>
<div class="it" style="top:637px">Дефрагментирован: Еще нет</div>
<div class="a" style="left:314px;top:657px;width:129px;height:16px;background:linear-gradient(#f2f4f8,#e4e8ee 50%,#d6dce4)"></div>
<div class="t" style="left:317px;top:660.5px;color:#000;font-size:10.9px;text-shadow:none">Сбросить по умолчанию</div>
<div class="a" style="left:924px;top:657px;width:128px;height:16px;background:linear-gradient(#f2f4f8,#e4e8ee 50%,#d6dce4)"></div>
<div class="t" style="left:939px;top:660.5px;color:#000;font-size:10.9px;text-shadow:none">Сбросить позицию</div>

<div class="a" style="left:1058px;top:31px;width:1px;height:672px;background:#6b7b91"></div>
</body></html>
